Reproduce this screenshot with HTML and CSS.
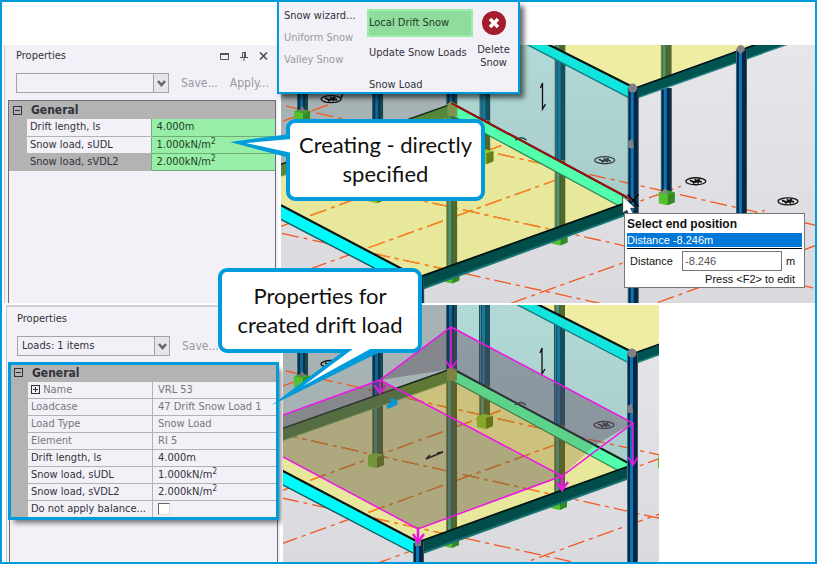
FILE: index.html
```html
<!DOCTYPE html>
<html lang="en">
  <head>
    <meta charset="UTF-8">
    <meta name="viewport" content="width=device-width, initial-scale=1.0">
    <title>Local Drift Snow</title>
    <link rel="stylesheet" href="styles.css">
  </head>
  <body>

    <!-- Shared drawing of the structure, used by both views -->
    <svg class="defs" width="0" height="0" aria-hidden="true">
      <defs>
        <linearGradient id="sky" x1="0" y1="0" x2="0" y2="1">
          <stop offset="0" stop-color="#e7e6ea"/>
          <stop offset="1" stop-color="#dad9de"/>
        </linearGradient>
        <linearGradient id="glass" x1="0" y1="0" x2="0" y2="1">
          <stop offset="0" stop-color="#b1dad6"/>
          <stop offset="1" stop-color="#a9ccca"/>
        </linearGradient>
        <g id="column">
          <rect width="11" height="300" fill="#06263e"/>
          <rect width="1" height="300" fill="#3c6f8c"/>
          <rect x="3" width="3" height="300" fill="#0877c0"/>
          <rect x="10" width="1" height="300" fill="#3c5468"/>
        </g>
        <g id="column-wall">
          <rect width="11" height="300" fill="#0b3348"/>
          <rect width="1" height="300" fill="#36667a"/>
          <rect x="3" width="3" height="300" fill="#0c679b"/>
          <rect x="8" width="3" height="300" fill="#194653"/>
        </g>
        <g id="column-glass">
          <rect width="11" height="300" fill="#164f5c"/>
          <rect x="1" width="1" height="300" fill="#4a8796"/>
          <rect x="3" width="3" height="300" fill="#157a9d"/>
        </g>
        <g id="column-floor">
          <rect width="11" height="300" fill="#50682b"/>
          <rect width="1" height="300" fill="#7b9252"/>
          <rect x="2" width="3" height="300" fill="#529272"/>
          <rect x="5" width="1" height="300" fill="#2f6848"/>
        </g>
        <g id="base">
          <path d="M0 2 L8 0 L16 2 V12 L8 15 L0 13Z" fill="#57c032"/>
          <path d="M9 4 L16 2 V12 L9 15Z" fill="#348a25"/>
          <path d="M0 2 L8 0 L16 2 L9 4Z" fill="#3ea02e"/>
        </g>
        <g id="base-floor">
          <path d="M0 2 L8 0 L16 2 V12 L8 15 L0 13Z" fill="#89c82c"/>
          <path d="M9 4 L16 2 V12 L9 15Z" fill="#667e16"/>
        </g>
        <g id="marker" fill="none" stroke="#111">
          <ellipse rx="10" ry="3.5" stroke-width="1.3"/>
          <path d="M-6 -1 L-1 1 L4 -2 M-3 2 L2 -1 L6 1 M-1 -2 L3 2" stroke-width="1.8"/>
        </g>
        <clipPath id="floor-clip">
          <path d="M283 174 L451 114 L623 207 L422 276 L283 206Z"/>
        </clipPath>
        <g id="grid-lines" fill="none" stroke-dasharray="17 5 4 5" stroke-width="1.3">
          <path d="M281 169 L815 288"/>
          <path d="M286 106 L815 225"/>
          <path d="M282 233 L600 303"/>
          <path d="M281 279 L560 178"/>
          <path d="M281 226 L510 142"/>
          <path d="M375 299 L450 272"/>
          <path d="M510 303 L690 238"/>
          <path d="M590 219 L680 186"/>
          <path d="M657 302 L815 245"/>
          <path d="M283 121 L330 104"/>
          <path d="M740 217 L764 210"/>
        </g>

        <g id="structure">
          <rect x="281" y="38" width="540" height="266" fill="url(#sky)"/>
          <path d="M281 38 H451 V104 L281 165Z" fill="#a7b2b4"/>
          <path d="M451 38 H536 L632 92 V200 L451 104Z" fill="url(#glass)"/>
          <path d="M281 174 L451 112 L626 206 L421 277 L281 206Z" fill="#e8e89d"/>
          <use href="#grid-lines" stroke="#f4571f"/>
          <use href="#grid-lines" stroke="#f48a1e" clip-path="url(#floor-clip)"/>

          <!-- columns behind the walls -->
          <svg x="297" y="38" width="11" height="73"><use href="#column-wall"/></svg>
          <use href="#base" x="294" y="109"/>
          <path d="M299 111 L302 106 L306 111Z" fill="#777"/>
          <svg x="372" y="38" width="11" height="95"><use href="#column-wall"/></svg>
          <svg x="372" y="133" width="11" height="58"><use href="#column-floor"/></svg>
          <use href="#base-floor" x="368" y="188"/>
          <svg x="479" y="38" width="11" height="82"><use href="#column-glass"/></svg>
          <svg x="479" y="120" width="11" height="33"><use href="#column-floor"/></svg>
          <use href="#base-floor" x="477" y="149"/>
          <svg x="554" y="38" width="11" height="122"><use href="#column-glass"/></svg>
          <svg x="554" y="160" width="11" height="76"><use href="#column-floor"/></svg>
          <use href="#base" x="551" y="230"/>
          <svg x="446" y="104" width="11" height="164"><use href="#column-floor"/></svg>
          <use href="#base" x="443" y="268"/>

          <!-- floor beams -->
          <path d="M281 164 L451 104 V116 L281 176Z" fill="#55863a"/>
          <path d="M281 164 L451 104" stroke="#14251a" stroke-width="1.5"/>
          <path d="M281 176 L446 118" stroke="#77a04c" stroke-width="1"/>
          <svg x="446" y="38" width="11" height="66"><use href="#column-wall"/></svg>
          <path d="M451 103 L632 200 L621 207 L451 115Z" fill="#52ffad"/>
          <path d="M451 115 L621 207" stroke="#2d8358" stroke-width="1.2"/>
          <path d="M451 103 L632 200" stroke="#0b221a" stroke-width="2"/>
          <path d="M447 104 L451 101 L457 105 V116 H447Z" fill="#7c9450"/>
          <path d="M281 205 L415 277 V289 L281 219Z" fill="#00fafa"/>
          <path d="M281 219 L415 289" stroke="#085d62" stroke-width="1.4"/>
          <path d="M281 205 L418 277" stroke="#05120e" stroke-width="2.2"/>
          <path d="M418 277 L632 200 V212 L420 289Z" fill="#004d4a"/>
          <path d="M420 289 L632 212" stroke="#167472" stroke-width="2"/>
          <path d="M418 277 L632 200" stroke="#02110c" stroke-width="1.8"/>

          <!-- roof -->
          <path d="M539 38 L632 88 L770 38Z" fill="#eeeda2"/>
          <svg x="554" y="38" width="11" height="15"><use href="#column-floor"/></svg>
          <svg x="660" y="38" width="11" height="42"><use href="#column-floor"/></svg>
          <svg x="660" y="88" width="11" height="104"><use href="#column"/></svg>
          <use href="#base" x="658" y="190"/>
          <path d="M660 193 L664 188 L668 193Z" fill="#888"/>
          <path d="M515 38 H536 L632 87 V99 L628 98Z" fill="#12e5dd"/>
          <path d="M514 38 L629 98" stroke="#167b7c" stroke-width="1.4"/>
          <path d="M535 38 L632 87" stroke="#06130e" stroke-width="2.2"/>
          <path d="M632 89 L773 38 H804 L636 98Z" fill="#005451"/>
          <path d="M636 98 L804 38" stroke="#298280" stroke-width="1.4"/>
          <path d="M632 89 L773 38" stroke="#03120e" stroke-width="1.6"/>
          <svg x="735" y="50" width="11" height="180"><use href="#column"/></svg>
          <path d="M735 50 Q737 45 740 45 Q744 46 744 50 L740 54Z" fill="#858585"/>
          <svg x="627" y="88" width="11" height="216"><use href="#column"/></svg>
          <circle cx="632" cy="88" r="4.5" fill="#7e8284"/>
          <path d="M628 142 L631 140 L632 147 L629 147Z" stroke="#7e8284" stroke-width="2" fill="#7e8284"/>
          <svg x="413" y="278" width="11" height="26"><use href="#column"/></svg>
          <path d="M415 275 h6 v6 h-6z" fill="#727d80"/>

          <use href="#marker" x="604" y="160" opacity=".75"/>
          <use href="#marker" x="695" y="181"/>
          <use href="#marker" x="787" y="201"/>
          <use href="#marker" x="331" y="99"/>
          <path d="M341 98 L343 93" stroke="#111" stroke-width="1.5"/>
          <path d="M515 140 Q521 135 526 140" stroke="#17483f" stroke-width="1.5" fill="none"/>
          <path d="M540 88 L542 83 V109 L545 104" stroke="#111" fill="none" stroke-width="1.3"/>
          <path d="M430 190 L426 194 L443 187 L437 188" stroke="#111" fill="none" stroke-width="1.5"/>
        </g>
      </defs>
    </svg>

    <main class="stage">

      <section class="row row-creating">
        <form class="panel">
          <div class="panel-title">
            <h2>Properties</h2>
            <div class="window-tools">
              <button type="button" aria-label="Maximize"><svg width="9" height="7"><path d="M.5 1V6.500H8.500V1" fill="none" stroke="#555"/><path d="M0 1H9" stroke="#555" stroke-width="2"/></svg></button>
              <button type="button" aria-label="Pin"><svg width="8" height="9"><path d="M2.500 5V.5H5.500V5M0 5.500H8M4 6V9" fill="none" stroke="#555"/><path d="M5 0V5" stroke="#555" stroke-width="2"/></svg></button>
              <button type="button" aria-label="Close"><svg width="9" height="8"><path d="M1 .5L8 7.500M8 .5L1 7.500" stroke="#555" stroke-width="1.700"/></svg></button>
            </div>
          </div>
          <div class="toolbar">
            <div class="combo">
              <select aria-label="Selection"><option></option></select>
              <svg class="combo-arrow" width="15" height="18"><path d="M4 7L7.500 11L11 7" fill="none" stroke="#666" stroke-width="2.500"/></svg>
            </div>
            <button type="button" disabled>Save...</button>
            <button type="button" disabled>Apply...</button>
          </div>
          <div class="property-grid">
            <table>
              <thead>
                <tr><th class="gutter"><span class="toggle"><svg width="9" height="9"><path d="M2 4.500H7" stroke="#32323c"/></svg></span></th><th colspan="2">General</th></tr>
              </thead>
              <tbody class="highlight">
                <tr><td class="gutter"></td><td>Drift length, ls</td><td>4.000m</td></tr>
                <tr><td class="gutter"></td><td>Snow load, sUDL</td><td>1.000kN/m<sup>2</sup></td></tr>
                <tr class="selected"><td class="gutter"></td><td>Snow load, sVDL2</td><td>2.000kN/m<sup>2</sup></td></tr>
              </tbody>
            </table>
          </div>
        </form>

        <div class="view">
          <svg class="scene" viewBox="281 45 534 257" preserveAspectRatio="xMinYMin slice">
            <use href="#structure"/>
            <path d="M451 103 L632 200" stroke="#a01010" stroke-width="2"/>
            <path d="M627 194 L638 206 M638 194 L627 206" stroke="#000" stroke-width="1.2"/>
            <path d="M622 196 V213 L626 210 L629 216 L633 214 L630 208 H635Z" fill="#fff" stroke="#222" stroke-width=".8"/>
          </svg>
          <div class="prompt">
            <h3>Select end position</h3>
            <div class="prompt-option">Distance -8.246m</div>
            <div class="prompt-entry">
              <label for="distance">Distance</label>
              <input id="distance" type="text" value="-8.246">
              <span>m</span>
            </div>
            <p>Press &lt;F2&gt; to edit</p>
          </div>
        </div>
      </section>

      <section class="row row-created">
        <form class="panel">
          <div class="panel-title">
            <h2>Properties</h2>
          </div>
          <div class="toolbar">
            <div class="combo">
              <select aria-label="Selection"><option>Loads: 1 items</option></select>
              <svg class="combo-arrow" width="15" height="18"><path d="M4 7L7.500 11L11 7" fill="none" stroke="#666" stroke-width="2.500"/></svg>
            </div>
            <button type="button" disabled>Save...</button>
            <button type="button" disabled>Apply...</button>
          </div>
          <div class="property-grid">
            <table class="framed">
              <thead>
                <tr><th class="gutter"><span class="toggle"><svg width="9" height="9"><path d="M2 4.500H7" stroke="#32323c"/></svg></span></th><th colspan="2">General</th></tr>
              </thead>
              <tbody>
                <tr class="readonly"><td class="gutter"></td><td><span class="toggle"><svg width="9" height="9"><path d="M2 4.500H7M4.500 2V7" stroke="#32323c"/></svg></span> Name</td><td>VRL 53</td></tr>
                <tr class="readonly"><td class="gutter"></td><td>Loadcase</td><td>47 Drift Snow Load 1</td></tr>
                <tr class="readonly"><td class="gutter"></td><td>Load Type</td><td>Snow Load</td></tr>
                <tr class="readonly"><td class="gutter"></td><td>Element</td><td>RI 5</td></tr>
                <tr><td class="gutter"></td><td>Drift length, ls</td><td>4.000m</td></tr>
                <tr><td class="gutter"></td><td>Snow load, sUDL</td><td>1.000kN/m<sup>2</sup></td></tr>
                <tr><td class="gutter"></td><td>Snow load, sVDL2</td><td>2.000kN/m<sup>2</sup></td></tr>
                <tr><td class="gutter"></td><td><label for="balance">Do not apply balance...</label></td><td><input id="balance" type="checkbox"></td></tr>
              </tbody>
            </table>
          </div>
        </form>

        <div class="view">
          <svg class="scene" viewBox="283 40 376 258" preserveAspectRatio="xMinYMin slice">
            <use href="#structure"/>
            <!-- drift load volume -->
            <path d="M283 150 L380 115 L562 211 L418 264 L283 192Z" fill="#554850" fill-opacity=".4"/>
            <path d="M380 115 L451 62 V104Z" fill="#4c4050" fill-opacity=".38"/>
            <path d="M451 62 L633 158 L594 181 L451 104Z" fill="#604860" fill-opacity=".42"/>
            <path d="M380 130 L451 104 L594 181 L562 211 L380 115Z" fill="#805028" fill-opacity=".26"/>
            <g fill="none" stroke="#f015e6" stroke-width="1.5">
              <path d="M283 150 L380 115 L451 62 L633 158 L562 211 L418 264 L283 192 M380 115 L562 211"/>
              <path d="M451 62 V102 M446 96 L451 103 L457 96"/>
              <path d="M633 158 V200 M628 192 L633 200 L638 192"/>
            </g>
            <g fill="none" stroke="#f015e6" stroke-width="2.5">
              <path d="M380 115 V127 M374 120 L380 128 L386 120" stroke="#c426c8"/>
              <path d="M562 211 V225 M556 217 L562 225 L568 217"/>
              <path d="M418 264 V276 M413 269 L418 277 L424 269"/>
            </g>
            <path d="M386 141 L391 137 L390 134 L394 133 L398 137 L397 140 L388 144Z" fill="#0a96d4"/>
          </svg>
        </div>
      </section>

      <nav class="ribbon">
        <div class="ribbon-column">
          <button type="button">Snow wizard...</button>
          <button type="button" disabled>Uniform Snow</button>
          <button type="button" disabled>Valley Snow</button>
        </div>
        <div class="ribbon-column ribbon-main">
          <button type="button" class="active">Local Drift Snow</button>
          <button type="button">Update Snow Loads</button>
          <span class="ribbon-caption">Snow Load</span>
        </div>
        <button type="button" class="delete">
          <svg width="24" height="24" viewBox="0 0 24 24"><circle cx="12" cy="12" r="12" fill="#a51c2c"/><path d="M8 8L16 16M16 8L8 16" stroke="#fff" stroke-width="3.500"/></svg>
          <span>Delete<br>Snow</span>
        </button>
      </nav>

      <div class="callout callout-creating">
        Creating - directly<br>specified
        <svg class="tail" width="62" height="28" viewBox="230 132 62 28">
          <path d="M230 142 L290 134 V158Z" fill="#009bdb"/>
          <path d="M246 143 L292 139 V153Z" fill="#fff"/>
        </svg>
      </div>
      <div class="callout callout-created">
        Properties for<br>created drift load
        <svg class="tail" width="112" height="58" viewBox="272 348 112 58">
          <path d="M345 350 L272 405 L380 352Z" fill="#009bdb"/>
          <path d="M354 348 L303 386 L372 348Z" fill="#fff"/>
        </svg>
      </div>

    </main>

  </body>
</html>
```

FILE: styles.css
```css
* {
  box-sizing: border-box;
}

body {
  margin: 0;
  font-family: "DejaVu Sans Condensed", "DejaVu Sans", sans-serif;
  font-size: 11px;
  line-height: 16px;
  color: #32323c;
  background-color: #fff;
}

h2, h3, p {
  margin: 0;
  font-size: inherit;
  font-weight: normal;
}

button, select, input {
  font: inherit;
  color: inherit;
  margin: 0;
  padding: 0;
  border: none;
  background: none;
}

button {
  white-space: nowrap;
}

button:disabled {
  color: #9a9aa2;
}

svg {
  display: block;
}

.defs {
  position: absolute;
}

.stage {
  position: relative;
  display: flex;
  flex-direction: column;
  gap: 2px;
  min-height: 100vh;
  padding: 43px 0 0 2px;
  border: 2px solid #009bdb;
  overflow: hidden;
}

.row {
  display: flex;
  flex: 1 1 0px;
  gap: 3px;
}

/* Properties panel */
.panel {
  display: flex;
  flex-direction: column;
  width: 274px;
  flex: none;
  padding: 3px 2px 0 3px;
  border-left: 1px solid #c9c9d2;
  background-color: #f2f1f7;
}

.panel-title {
  display: flex;
  justify-content: space-between;
  padding: 0 8px;
}

.window-tools {
  display: flex;
  align-items: center;
  gap: 11px;
}

.toolbar {
  display: flex;
  align-items: center;
  gap: 12px;
  padding: 9px 4px 7px 8px;
  font-size: 12px;
}

.combo {
  position: relative;
  width: 153px;
  height: 20px;
  flex: none;
}

.combo select {
  appearance: none;
  width: 100%;
  height: 100%;
  padding: 0 4px;
  border: 1px solid #a3a3a8;
  border-radius: 0;
  font-size: 11px;
}

.combo-arrow {
  position: absolute;
  top: 1px;
  right: 1px;
  border-left: 1px solid #a3a3a8;
  background-color: #e6e6ea;
  pointer-events: none;
}

.property-grid {
  flex: 1;
  border: 1px solid #6e6e74;
  border-bottom: none;
}

.property-grid table {
  width: 100%;
  table-layout: fixed;
  border-collapse: collapse;
}

.property-grid th,
.property-grid td {
  height: 17px;
  padding: 0 0 0 3px;
  line-height: 16px;
  text-align: left;
  white-space: nowrap;
}

.property-grid th {
  height: 18px;
  padding-left: 4px;
  font-size: 12px;
  background-color: #b3b3b3;
}

.property-grid td {
  border-bottom: 1px solid #b3b3b3;
}

.property-grid .gutter {
  width: 18px;
  border-color: #b3b3b3;
  background-color: #b3b3b3;
}

.property-grid td:last-child {
  padding-left: 5px;
  border-left: 1px solid #b3b3b3;
}

.property-grid sup {
  position: relative;
  top: 1px;
  font-size: 8px;
  line-height: 0;
}

.toggle {
  display: inline-block;
  width: 9px;
  height: 9px;
  outline: 1px solid #32323c;
  outline-offset: -1px;
  vertical-align: -1px;
}

th .toggle {
  display: block;
}

.selected td {
  background-color: #b3b3b3;
}

.readonly {
  color: #77777d;
}

.property-grid .highlight td:last-child {
  border-color: #6fae79;
  color: #20402a;
  background-color: #98eea6;
}

.property-grid input[type="checkbox"] {
  display: block;
  appearance: none;
  width: 12px;
  height: 12px;
  border: 1px solid;
  border-color: #666 #ddd #ddd #666;
  background-color: #fff;
}

.framed {
  outline: 3px solid #009bdb;
  outline-offset: -1px;
  box-shadow: 4px 5px 5px rgba(0, 0, 0, 0.5);
  background-color: #f2f1f7;
}

.row-created .panel {
  padding: 4px 2px 0 2px;
  border-top: 2px solid #cfced6;
}

.row-created {
  padding-left: 2px;
}

/* 3D views */
.view {
  position: relative;
  flex: 1;
}

.row-creating .view {
  z-index: 1;
}

.row-created .view {
  max-width: 376px;
}

.scene {
  position: absolute;
  inset: 0;
  width: 100%;
  height: 100%;
}

.prompt {
  position: absolute;
  left: 343px;
  top: 168px;
  width: 181px;
  padding: 1px 2px 0;
  border: 1px solid #777;
  background-color: #fff;
  color: #111;
  font-family: "Liberation Sans", Arial, sans-serif;
}

.prompt h3 {
  font-size: 12px;
  font-weight: bold;
  line-height: 18px;
}

.prompt-option {
  height: 14px;
  line-height: 14px;
  color: #fff;
  background-color: #0078d7;
}

.prompt-entry {
  display: flex;
  align-items: center;
  gap: 4px;
  margin-top: 1px;
  padding: 2px 3px 0;
  border-top: 1px solid #000;
}

.prompt-entry label {
  width: 48px;
}

.prompt-entry input {
  width: 100px;
  height: 20px;
  padding: 0 2px;
  border: 1px solid #777;
  color: #555;
}

.prompt p {
  padding-right: 7px;
  text-align: right;
}

/* Snow ribbon */
.ribbon {
  position: absolute;
  z-index: 2;
  left: 275px;
  top: 0;
  display: flex;
  width: 243px;
  height: 92px;
  padding: 0 4px 0 5px;
  border: 2px solid #009bdb;
  border-top: none;
  background-color: #f2f1f7;
  box-shadow: 4px 4px 5px rgba(0, 0, 0, 0.6);
}

.ribbon-column {
  display: flex;
  flex-direction: column;
  align-items: flex-start;
  gap: 6px;
  width: 83px;
  padding-top: 6px;
}

.ribbon-main {
  gap: 8px;
  width: 106px;
  padding-top: 7px;
}

.ribbon-main button,
.ribbon-main span {
  padding-left: 2px;
}

.ribbon-main .active {
  width: 106px;
  height: 28px;
  text-align: left;
  border: 2px solid #98eea6;
  padding-left: 0;
  color: #20402a;
  background-color: #8fdc9d;
}

.ribbon-caption {
  margin-top: auto;
  line-height: 14px;
}

.delete {
  display: flex;
  flex-direction: column;
  align-items: center;
  gap: 8px;
  flex: 1;
  padding-top: 9px;
  line-height: 13px;
}

/* Callouts */
.callout {
  position: absolute;
  z-index: 2;
  border: 4px solid #009bdb;
  border-radius: 9px;
  background-color: #fff;
  color: #111;
  font-family: Lato, sans-serif;
  font-size: 22px;
  line-height: 29px;
  text-align: center;
  white-space: nowrap;
}

.callout-creating {
  left: 284px;
  top: 117px;
  width: 199px;
  padding: 7px 0 9px;
}

.callout-created {
  left: 216px;
  top: 266px;
  width: 204px;
  padding: 9px 0 10px;
}

.tail {
  position: absolute;
}

.callout-creating .tail {
  left: -60px;
  top: 9px;
}

.callout-created .tail {
  left: 50px;
  top: 76px;
}
```
